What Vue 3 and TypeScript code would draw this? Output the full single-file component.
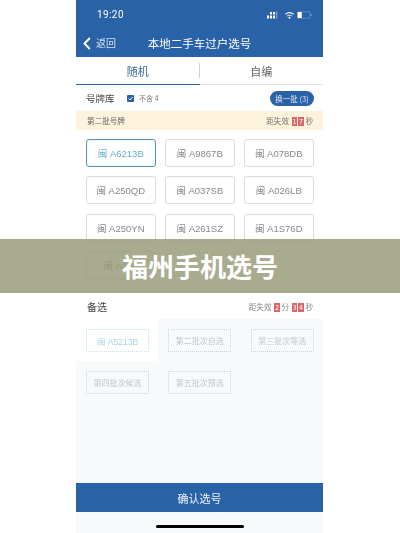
<script setup lang="ts">
const plates: string[] = [
  '闽 A6213B', '闽 A9867B', '闽 A078DB',
  '闽 A250QD', '闽 A037SB', '闽 A026LB',
  '闽 A250YN', '闽 A261SZ', '闽 A1S76D',
  '闽 A250'
]
const slots: string[] = ['闽 A5213B', '第二批次自选', '第三批次等选', '第四批次候选', '第五批次预选']
</script>

<template>
  <div class="page">
    <div class="phone">
      <header class="head">
        <div class="status">
          <span class="time">19:20</span>
          <span class="status-icons">
            <svg class="sig" width="11" height="8" viewBox="0 0 11 8"><g fill="#fff"><rect x="0" y="4.5" width="2" height="3"/><rect x="3" y="4.5" width="2" height="3"/><rect x="6" y="4.5" width="2" height="3"/><rect x="3" y="1" width="2" height="2.5"/><rect x="6" y="1" width="2" height="2.5"/><rect x="9" y="0.5" width="1.2" height="7" opacity=".45"/></g></svg>
            <svg class="wifi" width="9" height="7" viewBox="0 0 9 7"><path d="M0.5 2.2C3 0.3 6 0.3 8.5 2.2" fill="none" stroke="#fff" stroke-width="1.1"/><path d="M2.2 4C3.6 3 5.4 3 6.8 4" fill="none" stroke="#fff" stroke-width="1"/><circle cx="4.5" cy="5.8" r="1" fill="#fff"/></svg>
            <svg width="15" height="8" viewBox="0 0 15 8"><rect x=".3" y=".8" width="12.8" height="6.4" rx="1.2" fill="none" stroke="#fff" stroke-opacity=".4" stroke-width=".6"/><rect x=".6" y="1" width="4.2" height="6" rx=".6" fill="#fff"/><rect x="13.6" y="3" width=".9" height="2" fill="#fff" opacity=".45"/></svg>
          </span>
        </div>
        <div class="nav">
          <span class="back">
            <svg width="8" height="13" viewBox="0 0 8 13"><path d="M6.8 1 L1.5 6.5 L6.8 12" fill="none" stroke="#fff" stroke-width="1.9"/></svg>
            <span>返回</span>
          </span>
          <span class="title">本地二手车过户选号</span>
        </div>
      </header>

      <div class="tabs">
        <div class="tab active">随机</div>
        <div class="tab">自编</div>
      </div>

      <div class="lib">
        <span class="lib-name">号牌库</span>
        <span class="check">
          <svg width="7" height="7" viewBox="0 0 7 7"><rect width="7" height="7" rx="1" fill="#2a62a8"/><path d="M1.5 3.6 L3 5 L5.6 2" fill="none" stroke="#fff" stroke-width=".9"/></svg>
          不含 4
        </span>
        <span class="refresh">换一批 (3)</span>
      </div>

      <div class="batch">
        <span>第二批号牌</span>
        <span class="timer">距失效 <b>1</b><b>7</b> 秒</span>
      </div>

      <div class="grid">
        <div v-for="(p, i) in plates" :key="p" class="plate" :class="{ picked: i === 0 }">{{ p }}</div>
      </div>

      <div class="spare-head">
        <span class="spare-title">备选</span>
        <span class="spare-timer">距失效 <b>2</b> 分 <b>3</b><b>4</b> 秒</span>
      </div>

      <div class="spare">
        <div v-for="(s, i) in slots" :key="s" class="cell" :class="{ on: i === 0 }">
          <div class="slot">{{ s }}</div>
        </div>
      </div>

      <div class="fill"></div>
      <button class="confirm" type="button">确认选号</button>
      <div class="foot"><span class="home"></span></div>
    </div>

    <div class="banner">福州手机选号</div>
  </div>
</template>

<style>
html, body { margin: 0; background: #fff; }
</style>

<style scoped>
.page {
  position: relative;
  width: 400px;
  height: 533px;
  overflow: hidden;
  background: #fff;
  font-family: "Noto Sans CJK SC", "Liberation Sans", sans-serif;
}
.phone {
  width: 247px;
  height: 533px;
  margin-left: 76px;
  display: flex;
  flex-direction: column;
  background: #fff;
  filter: blur(0.4px);
}
.head { background: #2a62a8; color: #fff; height: 57px; flex: none; }
.status {
  height: 30px;
  display: flex;
  align-items: center;
  justify-content: space-between;
  padding: 0 11px 0 21px;
}
.time { font: 400 10px/1 Roboto, sans-serif; letter-spacing: .4px; }
.status-icons { display: flex; align-items: center; }
.sig { margin-right: 7px; }
.wifi { margin-right: 3px; }
.nav { position: relative; height: 27px; display: flex; align-items: center; justify-content: center; }
.back {
  position: absolute;
  left: 7px;
  top: 6px;
  display: flex;
  align-items: center;
  gap: 5px;
  font-size: 10px;
  line-height: 14px;
  color: #d3e0f0;
}
.title { font-size: 11.5px; line-height: 1; }
.tabs {
  height: 28px;
  flex: none;
  display: flex;
  align-items: center;
  border-bottom: 1px solid #dfe3e6;
  box-sizing: border-box;
  position: relative;
}
.tab {
  flex: 1;
  height: 100%;
  display: flex;
  align-items: center;
  justify-content: center;
  font-size: 11px;
  color: #666;
  box-sizing: border-box;
  position: relative;
}
.tab.active { color: #3a6a9e; border-bottom: 1px solid #2a62a8; height: calc(100% + 1px); margin-top: 1px; }
.tab.active::after {
  content: "";
  position: absolute;
  right: 0;
  top: 6px;
  height: 15px;
  width: 1px;
  background: #cfd4d8;
}
.lib {
  height: 26px;
  flex: none;
  display: flex;
  align-items: center;
  padding: 0 9px 0 10px;
  color: #444;
}
.lib-name { font-size: 9.5px; }
.check {
  margin-left: 12px;
  display: flex;
  align-items: center;
  gap: 4px;
  font-size: 7px;
  color: #777;
  white-space: pre;
}
.refresh {
  margin-left: auto;
  width: 44px;
  height: 15px;
  border-radius: 8px;
  background: #2a62a8;
  color: #dfe9f4;
  font-size: 7.5px;
  display: flex;
  align-items: center;
  justify-content: center;
  white-space: nowrap;
}
.batch {
  height: 19px;
  flex: none;
  background: #fdf3dc;
  display: flex;
  align-items: center;
  justify-content: space-between;
  padding: 0 10px 0 11px;
  font-size: 7.6px;
  color: #666;
}
.timer { font-size: 7.6px; color: #777; }
.timer b, .spare-timer b {
  display: inline-block;
  width: 5.5px;
  height: 9px;
  line-height: 9px;
  margin-left: 1px;
  background: #d9666a;
  color: #fff;
  font-size: 6.5px;
  font-weight: 400;
  text-align: center;
  vertical-align: middle;
}
.grid {
  flex: none;
  display: grid;
  grid-template-columns: repeat(3, 69.5px);
  grid-auto-rows: 28px;
  column-gap: 9.5px;
  row-gap: 9.3px;
  padding: 9px 0 0 10px;
  box-sizing: border-box;
  height: 164px;
}
.plate {
  border: 1px solid #d9dcdf;
  border-radius: 3px;
  box-sizing: border-box;
  display: flex;
  align-items: center;
  justify-content: center;
  font-size: 9.5px;
  color: #888;
  font-family: "Liberation Sans", "Noto Sans CJK SC", sans-serif;
  white-space: nowrap;
}
.plate.picked { border-color: #5b93ad; color: #62aecb; box-shadow: inset 0 0 3px #d9f2fb; }
.spare-head {
  height: 25px;
  flex: none;
  display: flex;
  align-items: center;
  justify-content: space-between;
  padding: 0 10px 0 11px;
}
.spare-title { font-size: 10px; color: #444; }
.spare-timer { font-size: 7.6px; color: #888; }
.spare {
  flex: none;
  height: 91px;
  display: grid;
  grid-template-columns: repeat(3, 82.33px);
  grid-auto-rows: 42px;
  background: #f7fafb;
}
.cell { padding: 10px 0 9px 10px; box-sizing: border-box; }
.cell.on { background: #fff; }
.slot {
  width: 63px;
  height: 23px;
  border: 1px dotted #cfd2d4;
  box-sizing: border-box;
  display: flex;
  align-items: center;
  justify-content: center;
  font-size: 8px;
  color: #c4c7c9;
  white-space: nowrap;
}
.cell.on .slot { border-color: #c4e2ec; color: #a6d5e6; font-family: "Liberation Sans", "Noto Sans CJK SC", sans-serif; font-size: 8.5px; }
.fill { flex: 1; background: #f7fafb; }
.confirm {
  flex: none;
  height: 29px;
  border: 0;
  padding: 0;
  background: #2a62a8;
  color: #eef3f9;
  font: 400 11px "Noto Sans CJK SC", sans-serif;
}
.foot {
  flex: none;
  height: 21px;
  background: #f7fafb;
  display: flex;
  justify-content: center;
  padding-top: 13px;
  box-sizing: border-box;
}
.home { width: 88px; height: 3px; border-radius: 2px; background: #000; }
.banner {
  position: absolute;
  left: 0;
  right: 0;
  top: 239px;
  height: 54px;
  background: rgba(150, 152, 118, 0.82);
  color: #fff;
  font-size: 26px;
  font-weight: 700;
  line-height: 54px;
  text-align: center;
}
</style>
